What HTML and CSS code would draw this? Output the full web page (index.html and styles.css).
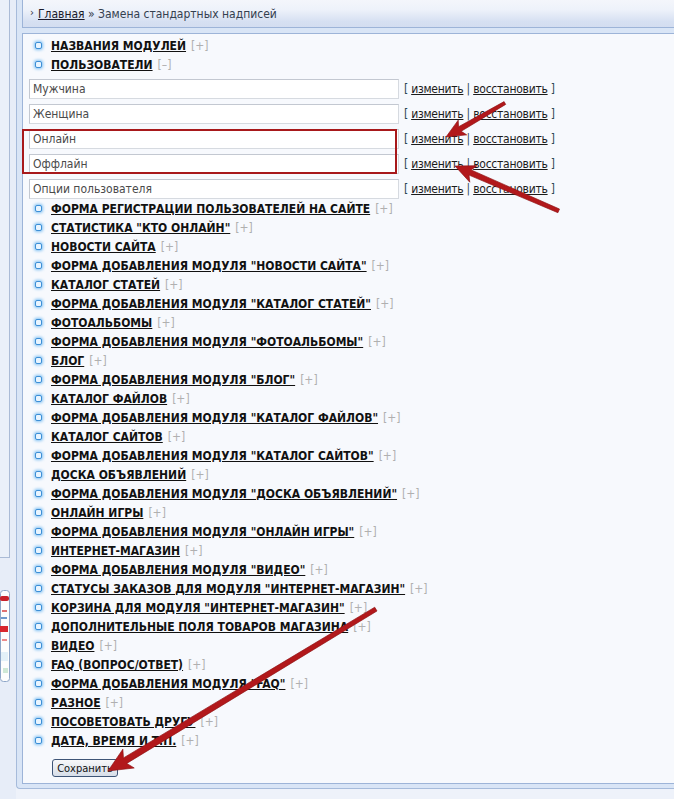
FILE: index.html
```html
<!DOCTYPE html>
<html lang="ru">
<head>
<meta charset="utf-8">
<title>Замена стандартных надписей</title>
<link rel="stylesheet" href="styles.css">
</head>
<body>
<div class="page">
  <aside class="side">
    <div class="side-box"></div>
    <div class="banner">
      <svg width="10" height="92" viewBox="0 0 10 92">
        <rect x="0.5" y="0.5" width="9" height="91" rx="3" fill="#fdfdfd" stroke="#8ea6c8"/>
        <rect x="0" y="6" width="9" height="5" rx="2" fill="#c8202a"/>
        <rect x="2" y="20" width="5" height="2" fill="#e07070"/>
        <rect x="1" y="27" width="6" height="2" fill="#6f98cc"/>
        <rect x="0" y="36" width="8" height="6" fill="#d8262e"/>
        <rect x="2" y="49" width="5" height="2" fill="#ec8a8a"/>
        <rect x="1" y="62" width="7" height="9" fill="#e3f0f8"/>
        <rect x="3" y="78" width="5" height="5" fill="#cfe8d6"/>
      </svg>
    </div>
  </aside>
  <main class="main">
    <div class="header">
      <span class="crumb-arrow">›</span>
      <a class="crumb-link" href="#">Главная</a>
      <span class="crumb-text">&nbsp;» Замена стандартных надписей</span>
    </div>
    <form class="content">
      <div class="item"><span class="bullet"></span><a href="#" class="title">НАЗВАНИЯ МОДУЛЕЙ</a><span class="tog">[+]</span></div>
      <div class="item"><span class="bullet"></span><a href="#" class="title">ПОЛЬЗОВАТЕЛИ</a><span class="tog">[–]</span></div>

      <div class="field"><input class="inp" type="text" value="Мужчина"><span class="acts">[ <a href="#">изменить</a> | <a href="#">восстановить</a> ]</span></div>
      <div class="field"><input class="inp" type="text" value="Женщина"><span class="acts">[ <a href="#">изменить</a> | <a href="#">восстановить</a> ]</span></div>
      <div class="field"><input class="inp" type="text" value="Онлайн"><span class="acts">[ <a href="#">изменить</a> | <a href="#">восстановить</a> ]</span></div>
      <div class="field"><input class="inp" type="text" value="Оффлайн"><span class="acts">[ <a href="#">изменить</a> | <a href="#">восстановить</a> ]</span></div>
      <div class="field"><input class="inp" type="text" value="Опции пользователя"><span class="acts">[ <a href="#">изменить</a> | <a href="#">восстановить</a> ]</span></div>

      <div class="item"><span class="bullet"></span><a href="#" class="title">ФОРМА РЕГИСТРАЦИИ ПОЛЬЗОВАТЕЛЕЙ НА САЙТЕ</a><span class="tog">[+]</span></div>
      <div class="item"><span class="bullet"></span><a href="#" class="title">СТАТИСТИКА "КТО ОНЛАЙН"</a><span class="tog">[+]</span></div>
      <div class="item"><span class="bullet"></span><a href="#" class="title">НОВОСТИ САЙТА</a><span class="tog">[+]</span></div>
      <div class="item"><span class="bullet"></span><a href="#" class="title">ФОРМА ДОБАВЛЕНИЯ МОДУЛЯ "НОВОСТИ САЙТА"</a><span class="tog">[+]</span></div>
      <div class="item"><span class="bullet"></span><a href="#" class="title">КАТАЛОГ СТАТЕЙ</a><span class="tog">[+]</span></div>
      <div class="item"><span class="bullet"></span><a href="#" class="title">ФОРМА ДОБАВЛЕНИЯ МОДУЛЯ "КАТАЛОГ СТАТЕЙ"</a><span class="tog">[+]</span></div>
      <div class="item"><span class="bullet"></span><a href="#" class="title">ФОТОАЛЬБОМЫ</a><span class="tog">[+]</span></div>
      <div class="item"><span class="bullet"></span><a href="#" class="title">ФОРМА ДОБАВЛЕНИЯ МОДУЛЯ "ФОТОАЛЬБОМЫ"</a><span class="tog">[+]</span></div>
      <div class="item"><span class="bullet"></span><a href="#" class="title">БЛОГ</a><span class="tog">[+]</span></div>
      <div class="item"><span class="bullet"></span><a href="#" class="title">ФОРМА ДОБАВЛЕНИЯ МОДУЛЯ "БЛОГ"</a><span class="tog">[+]</span></div>
      <div class="item"><span class="bullet"></span><a href="#" class="title">КАТАЛОГ ФАЙЛОВ</a><span class="tog">[+]</span></div>
      <div class="item"><span class="bullet"></span><a href="#" class="title">ФОРМА ДОБАВЛЕНИЯ МОДУЛЯ "КАТАЛОГ ФАЙЛОВ"</a><span class="tog">[+]</span></div>
      <div class="item"><span class="bullet"></span><a href="#" class="title">КАТАЛОГ САЙТОВ</a><span class="tog">[+]</span></div>
      <div class="item"><span class="bullet"></span><a href="#" class="title">ФОРМА ДОБАВЛЕНИЯ МОДУЛЯ "КАТАЛОГ САЙТОВ"</a><span class="tog">[+]</span></div>
      <div class="item"><span class="bullet"></span><a href="#" class="title">ДОСКА ОБЪЯВЛЕНИЙ</a><span class="tog">[+]</span></div>
      <div class="item"><span class="bullet"></span><a href="#" class="title">ФОРМА ДОБАВЛЕНИЯ МОДУЛЯ "ДОСКА ОБЪЯВЛЕНИЙ"</a><span class="tog">[+]</span></div>
      <div class="item"><span class="bullet"></span><a href="#" class="title">ОНЛАЙН ИГРЫ</a><span class="tog">[+]</span></div>
      <div class="item"><span class="bullet"></span><a href="#" class="title">ФОРМА ДОБАВЛЕНИЯ МОДУЛЯ "ОНЛАЙН ИГРЫ"</a><span class="tog">[+]</span></div>
      <div class="item"><span class="bullet"></span><a href="#" class="title">ИНТЕРНЕТ-МАГАЗИН</a><span class="tog">[+]</span></div>
      <div class="item"><span class="bullet"></span><a href="#" class="title">ФОРМА ДОБАВЛЕНИЯ МОДУЛЯ "ВИДЕО"</a><span class="tog">[+]</span></div>
      <div class="item"><span class="bullet"></span><a href="#" class="title">СТАТУСЫ ЗАКАЗОВ ДЛЯ МОДУЛЯ "ИНТЕРНЕТ-МАГАЗИН"</a><span class="tog">[+]</span></div>
      <div class="item"><span class="bullet"></span><a href="#" class="title">КОРЗИНА ДЛЯ МОДУЛЯ "ИНТЕРНЕТ-МАГАЗИН"</a><span class="tog">[+]</span></div>
      <div class="item"><span class="bullet"></span><a href="#" class="title">ДОПОЛНИТЕЛЬНЫЕ ПОЛЯ ТОВАРОВ МАГАЗИНА</a><span class="tog">[+]</span></div>
      <div class="item"><span class="bullet"></span><a href="#" class="title">ВИДЕО</a><span class="tog">[+]</span></div>
      <div class="item"><span class="bullet"></span><a href="#" class="title">FAQ (ВОПРОС/ОТВЕТ)</a><span class="tog">[+]</span></div>
      <div class="item"><span class="bullet"></span><a href="#" class="title">ФОРМА ДОБАВЛЕНИЯ МОДУЛЯ "FAQ"</a><span class="tog">[+]</span></div>
      <div class="item"><span class="bullet"></span><a href="#" class="title">РАЗНОЕ</a><span class="tog">[+]</span></div>
      <div class="item"><span class="bullet"></span><a href="#" class="title">ПОСОВЕТОВАТЬ ДРУГУ</a><span class="tog">[+]</span></div>
      <div class="item"><span class="bullet"></span><a href="#" class="title">ДАТА, ВРЕМЯ И Т.П.</a><span class="tog">[+]</span></div>

      <button class="save" type="button">Сохранить</button>
    </form>
  </main>
</div>

<div class="highlight"></div>
<svg class="arrows" width="674" height="799" viewBox="0 0 674 799">
  <g fill="#b2181b" stroke="#8e1214" stroke-width="0.6" stroke-linejoin="round">
    <g transform="translate(446 137) rotate(150)">
      <path d="M0 0 L-19 -8.5 L-16 -2.6 L-68 -1.6 L-68 1.6 L-16 2.6 L-19 8.5 Z"/>
    </g>
    <g transform="translate(455 166) rotate(203.4)">
      <path d="M0 0 L-20 -9 L-16.5 -2.8 L-113 -2 L-113 2 L-16.5 2.8 L-20 9 Z"/>
    </g>
    <g transform="translate(108 771) rotate(148.85)">
      <path d="M0 0 L-24 -11 L-20 -3.2 L-313 -2.2 L-313 2.2 L-20 3.2 L-24 11 Z"/>
    </g>
  </g>
</svg>
</body>
</html>
```

FILE: styles.css
```css
html, body {
  margin: 0;
  padding: 0;
}

body {
  background: #eef2fa;
  font-family: "DejaVu Sans Condensed", "DejaVu Sans", sans-serif;
  font-stretch: condensed;
  font-size: 12px;
  color: #222;
  overflow: hidden;
  width: 674px;
  height: 799px;
  position: relative;
}

.page {
  display: flex;
  align-items: flex-start;
  width: 674px;
}

.side {
  flex: none;
  width: 16px;
  height: 799px;
  background: #e7edf8;
  display: flex;
  flex-direction: column;
}

.side-box {
  width: 9px;
  height: 557px;
  border-right: 1px solid #aabbd6;
  border-bottom: 1px solid #aabbd6;
  background: #eaf0f9;
}

.banner {
  margin-top: 32px;
  width: 10px;
  height: 92px;
}

.banner svg {
  display: block;
}

.main {
  flex: 1;
  min-width: 0;
  background: #d9e5f6;
  border-left: 1px solid #a6bbdb;
  border-bottom: 1px solid #a6bbdb;
  border-bottom-left-radius: 4px;
  padding: 0 0 4px 5px;
}

.header {
  height: 27px;
  border-left: 1px solid #9db4d8;
  border-bottom: 1px solid #9db4d8;
  background: linear-gradient(#f4f6fb 0%, #eef2fa 35%, #d6e0f2 80%, #d3ddf0 100%);
  display: flex;
  align-items: center;
  padding-left: 7px;
  color: #34404f;
  white-space: nowrap;
}

.crumb-arrow {
  font-size: 11px;
  color: #334;
  margin-right: 4px;
  position: relative;
  top: -1px;
}

.crumb-link {
  color: #1a1a2a;
  text-decoration: underline;
}

.crumb-text {
  color: #34404f;
}

.content {
  margin: 5px 0 0 0;
  border: 1px solid #9db4d8;
  border-right: none;
  background: #f7f9fd;
  padding: 2px 0 6px 12px;
}

.item {
  display: flex;
  align-items: center;
  height: 19px;
  white-space: nowrap;
}

.bullet {
  flex: none;
  width: 7px;
  height: 7px;
  box-sizing: border-box;
  border: 1px solid #3d8fd6;
  border-radius: 2px;
  background: #e9f5ff;
  box-shadow: 0 0 3px 1px rgba(90, 175, 240, 0.75);
  margin-right: 9px;
}

.title {
  font-weight: bold;
  color: #111;
  text-decoration: underline;
}

.tog {
  color: #b0b0b0;
  margin-left: 5px;
}

.field {
  display: flex;
  align-items: center;
  height: 20px;
  padding-top: 5px;
  white-space: nowrap;
}

.inp {
  flex: none;
  width: 370px;
  height: 20px;
  box-sizing: border-box;
  margin: 0 0 0 -6px;
  padding: 0 3px;
  border: 1px solid #c3c8d1;
  border-right-color: #d6dae0;
  border-bottom-color: #d6dae0;
  background: #fff;
  font-family: inherit;
  font-stretch: condensed;
  font-size: 12px;
  color: #4a4a4a;
  outline: none;
}

.acts {
  margin-left: 5px;
  color: #2d4a56;
  letter-spacing: -0.25px;
}

.acts a {
  color: #1c1c1c;
  text-decoration: underline;
}

.save {
  display: block;
  margin: 9px 0 0 17px;
  width: 66px;
  height: 18px;
  padding: 0;
  border: 1px solid #3e5577;
  border-radius: 3px;
  background: linear-gradient(#f7f8fa, #e6eaf0 50%, #d7dee9);
  font-family: inherit;
  font-stretch: condensed;
  font-size: 11px;
  color: #111;
}

.highlight {
  position: absolute;
  left: 22px;
  top: 129px;
  width: 371px;
  height: 41px;
  border: 2px solid #a8191b;
  pointer-events: none;
}

.arrows {
  position: absolute;
  left: 0;
  top: 0;
  pointer-events: none;
}
```
